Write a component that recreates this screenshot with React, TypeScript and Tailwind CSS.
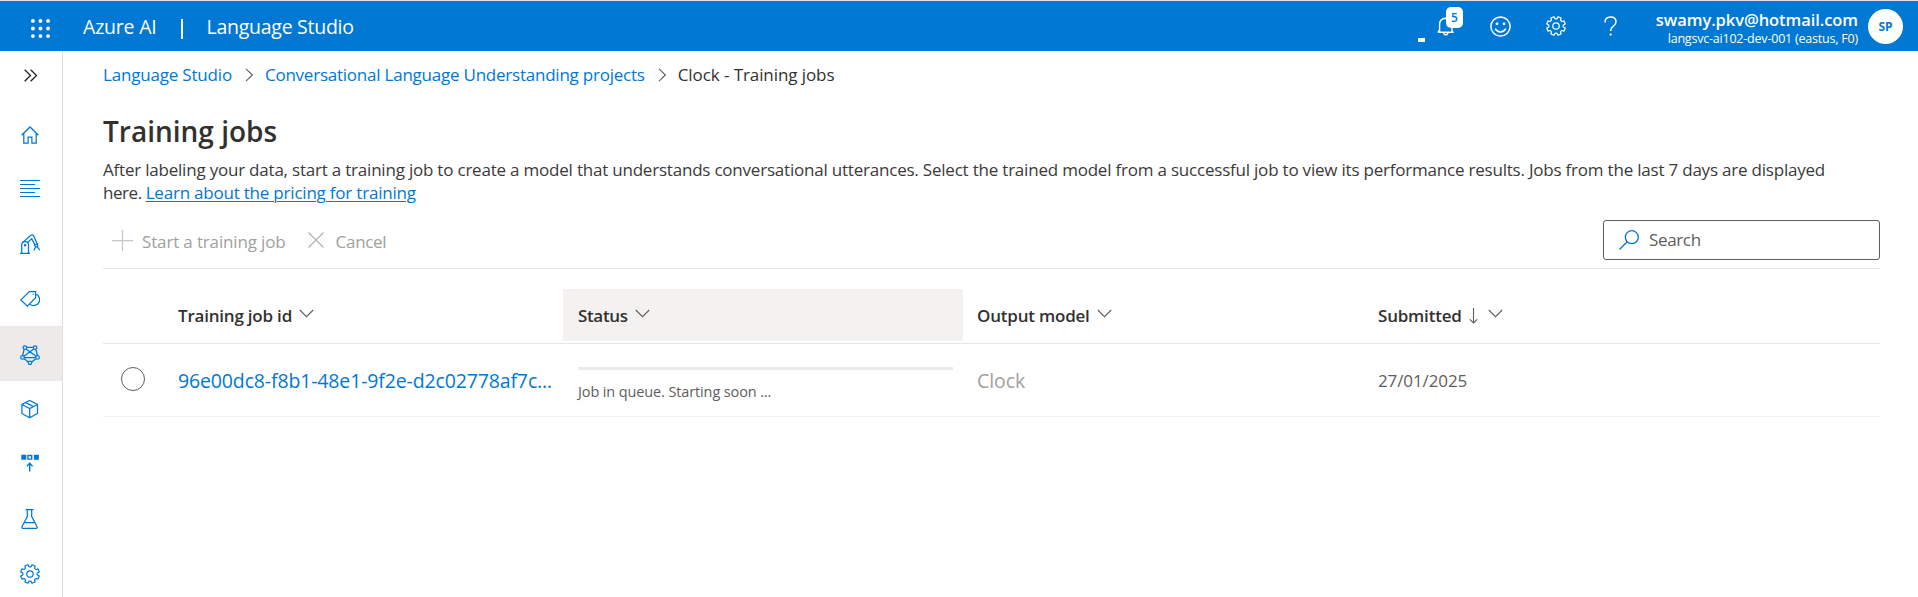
import type { ReactNode } from "react";

function Icon({ size = 20, h, sw = 1.25, className = "", children }: { size?: number; h?: number; sw?: number; className?: string; children: ReactNode }) {
  const height = h ?? size;
  return (
    <svg width={size} height={height} viewBox={`0 0 ${size} ${height}`} fill="none" stroke="currentColor" strokeWidth={sw} className={`block shrink-0 ${className}`}>
      {children}
    </svg>
  );
}

/* Eight teeth, with a rounded valley pointing straight up. */
function gearPath() {
  const p = (r: number, deg: number) => {
    const a = (deg * Math.PI) / 180;
    return `${(10 + r * Math.sin(a)).toFixed(2)} ${(10 - r * Math.cos(a)).toFixed(2)}`;
  };
  let d = "";
  for (let i = 0; i < 8; i++) {
    const c = i * 45 + 22.5;
    d += `${i ? "L" : "M"}${p(7.4, c - 15)}L${p(9.5, c - 10)}L${p(9.5, c + 10)}L${p(7.4, c + 15)}Q${p(6.9, c + 22.5)} ${p(7.4, c + 30)}`;
  }
  return d + "Z";
}

const Gear = () => (
  <Icon>
    <path d={gearPath()} strokeLinejoin="round" />
    <circle cx="10" cy="10" r="3.2" />
  </Icon>
);

const ChevronDown = () => (
  <Icon size={15} h={9} sw={1.1} className="mb-[5px] text-[#605e5c]">
    <path d="M.8 1l6.700 6.700L14.200 1" />
  </Icon>
);

const Crumb = () => (
  <Icon size={9} h={14} sw={1.1} className="text-[#605e5c]">
    <path d="M1 .8L7.400 7 1 13.200" />
  </Icon>
);

const navItems: { id: string; cell: string; icon: ReactNode }[] = [
  { id: "home", cell: "h-[55px]", icon: <Icon><path d="M1.600 10.300L10 2l8.400 8.300M3.800 8.500v9.700h4.300v-6h3.800v6h4.300V8.500" /></Icon> },
  { id: "text", cell: "h-[54px] pb-[2px]", icon: <Icon><path d="M0 2.500h20M0 6.500h15M0 10.500h20M0 14.500h15M0 18.500h20" strokeWidth="1.1" /></Icon> },
  {
    id: "robot",
    cell: "h-[55px]",
    icon: (
      <Icon>
        <path d="M0 19.300h10M1.700 19.300V11a3.400 3.400 0 016.800 0v8.300" />
        <path d="M2.700 8.400L10.900 1.300q1.700-1.200 2.900.6l3.300 8.200M7.600 8.600l4.100-3.900 3.300 6.200" />
        <path d="M14.700 11.200l2.900-1.300v2.900h-2.100zM15.700 12.800l-1.500 3M17.300 12.800l2 2.600v.8M14.300 15.500v.900" />
        <circle cx="5.100" cy="11.300" r="1.200" fill="currentColor" stroke="none" />
      </Icon>
    ),
  },
  {
    id: "tags",
    cell: "h-[55px]",
    icon: (
      <Icon>
        <path d="M.9 10.900L9.300 2.600h6.300v6.200l-8.200 8.300zM15.600 4.900a6 6 0 11-5.900 10.200" />
        <circle cx="13.200" cy="5.200" r=".7" fill="currentColor" stroke="none" />
      </Icon>
    ),
  },
  {
    id: "network",
    cell: "h-[55px] bg-[#edebe9] pt-[3px]",
    icon: (
      <Icon>
        <path d="M6.600 2.400h6.800M4.200 4.200L2.600 10.500M15.800 4.200l1.600 6.300M4.400 12.500h11.200M6.200 3.900l9.900 7.400M13.800 3.900l-9.900 7.400M4.200 13.700l4 3.400M15.800 13.700l-4 3.400" />
        <circle cx="4.900" cy="2.600" r="1.800" />
        <circle cx="15.100" cy="2.600" r="1.800" />
        <circle cx="2.500" cy="12.400" r="1.800" />
        <circle cx="17.500" cy="12.400" r="1.800" />
        <circle cx="10" cy="17.800" r="1.700" />
      </Icon>
    ),
  },
  {
    id: "models",
    cell: "h-[54px] pt-[2px]",
    icon: <Icon><path d="M9.700 1.500l7.800 4v9l-7.800 4.200-7.800-4.200v-9zM1.900 5.500l7.800 4 7.800-4M9.700 9.500v9.200M5.600 3.600l7.900 4" /></Icon>,
  },
  {
    id: "deploy",
    cell: "h-[54px] pt-[2px]",
    icon: (
      <Icon>
        <path d="M1.300 1.800h5v5h-5zM13.900 1.800h5v5h-5z" fill="currentColor" stroke="none" />
        <path d="M8 2.500h3.700v3.600H8zM9.700 18.500V10.400M6.800 13.200l2.900-2.900 2.900 2.900" strokeWidth="1.400" />
      </Icon>
    ),
  },
  {
    id: "flask",
    cell: "h-[56px] pt-[4px]",
    icon: <Icon><path d="M5.500.7h8M7.300.7v6.800L2.100 17.500q-.6 1.900.9 1.900h13q1.500 0 .9-1.900L11.700 7.500V.7M4.200 13.700h10.600" /></Icon>,
  },
  { id: "settings", cell: "h-[55px] pt-[2px]", icon: <Gear /> },
];

const th = "flex items-center text-[17px] font-semibold tracking-[-0.21px] text-[#323130] pt-[2px]";

export default function App() {
  return (
    <div className="flex h-[597px] w-full flex-col overflow-hidden bg-white font-['Open_Sans',sans-serif] text-[#323130]">
      <header className="flex h-[51px] shrink-0 items-center border-t border-[#dfe3e6] bg-[#0078d4] pr-[15px] pl-[31px] text-white">
        <Icon size={19} className="mt-[5px]">
          <g fill="currentColor" stroke="none">
            {[1.9, 9.5, 17.1].map((y) => [1.9, 9.5, 17.1].map((x) => <circle key={`${x}-${y}`} cx={x} cy={y} r="1.900" />))}
          </g>
        </Icon>
        <span className="mt-[1px] ml-[33px] text-[19.5px] tracking-[-0.2px]">Azure AI</span>
        <span className="mt-[5px] ml-[24px] h-[20px] w-[2px] bg-white" />
        <span className="mt-[1px] ml-[24px] text-[19.5px] tracking-[-0.27px]">Language Studio</span>

        <div className="ml-auto flex h-full items-center">
          <span className="mt-[27px] h-[4px] w-[7px] bg-white" />
          <div className="relative ml-[11px]">
            <Icon sw={1.4}>
              <path d="M3.600 15.700V8.500Q3.600 2.500 9.800 2.200q6.200.3 6.200 6.300v7.200M1.800 16.300h16M7.600 16.500q.2 2.300 2.200 2.300t2.200-2.300M3.600 14l-1.500 2" />
            </Icon>
            <span className="absolute -top-[9px] left-[10px] flex h-[21px] w-[17px] items-center justify-center rounded-[5px] bg-white text-[12px] leading-none font-semibold text-[#0078d4]">5</span>
          </div>
          <div className="ml-[34px]">
            <Icon size={21} sw={1.5}>
              <circle cx="10.500" cy="10.500" r="9.600" />
              <path d="M5.200 12.600q1.700 3.300 5.300 3.300t5.300-3.300" />
              <circle cx="7" cy="7.800" r="1.400" fill="currentColor" stroke="none" />
              <circle cx="14" cy="7.800" r="1.400" fill="currentColor" stroke="none" />
            </Icon>
          </div>
          <div className="ml-[35px]"><Gear /></div>
          <div className="ml-[38px]">
            <Icon size={13} h={20} sw={1.5}>
              <path d="M1 6.400Q1 1 6.500 1T12 5.800q0 2.200-2.600 4.400Q6.600 12.300 6.600 15" />
              <circle cx="6.600" cy="18.600" r="1.100" fill="currentColor" stroke="none" />
            </Icon>
          </div>
          <div className="mt-[5px] ml-[39px] flex w-[203px] flex-col items-end whitespace-nowrap">
            <span className="mr-[1px] text-[16.5px] leading-[20px] font-semibold tracking-[-0.07px]">swamy.pkv@hotmail.com</span>
            <span className="mr-[1px] text-[12.500px] leading-[18px] tracking-[-0.21px]">langsvc-ai102-dev-001 (eastus, F0)</span>
          </div>
          <span className="mt-[1px] ml-[9px] flex size-[35px] items-center justify-center rounded-full bg-white text-[12px] font-bold text-[#0078d4]">SP</span>
        </div>
      </header>

      <div className="flex min-h-0 flex-1">
        <nav className="w-[63px] shrink-0 border-r border-[#e1dfdd] text-[#0078d4]">
          <div className="flex h-[56px] items-start pt-[18px] pl-[24px] text-[#201f1e]">
            <Icon size={14} h={13} sw={1.3}><path d="M.7.7l5.800 5.800L.7 12.300M6.700.7l5.800 5.800-5.800 5.800" /></Icon>
          </div>
          {navItems.map(({ id, cell, icon }) => (
            <div key={id} className={`flex items-center justify-center pr-[2px] ${cell}`}>
              {icon}
            </div>
          ))}
        </nav>

        <main className="flex min-w-0 flex-1 flex-col pr-[38px] pl-[40px]">
          <div className="flex h-[47px] items-center text-[17px] whitespace-nowrap text-[#0078d4]">
            <a className="tracking-[-0.19px]">Language Studio</a>
            <span className="ml-[13px]"><Crumb /></span>
            <a className="ml-[11px] tracking-[-0.23px]">Conversational Language Understanding projects</a>
            <span className="ml-[13px]"><Crumb /></span>
            <span className="mt-[1px] ml-[11px] tracking-[-0.08px] text-[#323130]">Clock - Training jobs</span>
          </div>

          <h1 className="mt-[15px] text-[28px] leading-[36px] font-semibold">Training jobs</h1>

          <p className="mt-[9px] h-[46px] text-[17px] leading-[23px] tracking-[-0.21px] text-[#3b3a39]">
            <span className="whitespace-nowrap">After labeling your data, start a training job to create a model that understands conversational utterances. Select the trained model from a successful job to view its performance results. Jobs from the last 7 days are displayed</span>
            <br />
            <span className="tracking-[-0.45px]">here. </span>
            <a className="text-[#0078d4] underline decoration-1 underline-offset-2">Learn about the pricing for training</a>
          </p>

          <div className="mt-[10px] flex h-[55px] items-center border-b border-[#e6e6e6] pl-[9px] text-[17px] text-[#a19f9d]">
            <Icon size={21} className="mb-[2px] text-[#c8c6c4]"><path d="M10.500 0v21M0 10.500h21" /></Icon>
            <span className="mt-[1px] ml-[9px] tracking-[-0.15px]">Start a training job</span>
            <Icon size={16} className="mb-[2px] ml-[22px] text-[#b5b3b1]"><path d="M.5.5l15 15M15.500.5l-15 15" /></Icon>
            <span className="mt-[1px] ml-[12px] tracking-[-0.3px]">Cancel</span>
            <div className="mb-[3px] ml-auto flex h-[40px] w-[277px] items-center rounded-[3px] border border-[#605e5c] pl-[15px] text-[#605e5c]">
              <Icon sw={1.3} className="text-[#0078d4]">
                <circle cx="12.800" cy="7.200" r="6.500" />
                <path d="M8.200 11.800L.5 19.500" />
              </Icon>
              <span className="mt-[1px] ml-[10px] tracking-[-0.35px]">Search</span>
            </div>
          </div>

          <div className="mt-[20px] grid h-[55px] shrink-0 grid-cols-[60px_400px_400px_400px_1fr] border-b border-[#e6e6e6] pb-[2px]">
            <span />
            <div className={`${th} gap-[7px] pl-[15px]`}>Training job id<ChevronDown /></div>
            <div className={`${th} gap-[7px] bg-[#f3f2f1] pl-[15px]`}><span className="tracking-[-0.35px]">Status</span><ChevronDown /></div>
            <div className={`${th} gap-[7px] pl-[14px]`}>Output model<ChevronDown /></div>
            <div className={`${th} pl-[15px]`}>
              Submitted
              <Icon size={9} h={16} sw={1.1} className="mr-[10px] ml-[7px] text-[#605e5c]"><path d="M4.500 0v15M.8 11.300L4.500 15l3.700-3.700" /></Icon>
              <ChevronDown />
            </div>
          </div>

          <div className="grid h-[73px] shrink-0 grid-cols-[60px_400px_400px_400px_1fr] items-center border-b border-[#f3f2f1] whitespace-nowrap">
            <span className="mb-[2px] ml-[18px] size-[24px] rounded-full border-[1.5px] border-[#605e5c]" />
            <span className="pt-[2px] pl-[15px] text-[19.5px] tracking-[-0.14px] text-[#0078d4]">96e00dc8-f8b1-48e1-9f2e-d2c02778af7c...</span>
            <div className="h-full pt-[23px] pr-[10px] pl-[15px]">
              <div className="h-[3px] bg-[#eaeaea]" />
              <div className="mt-[12px] text-[14.5px] leading-[20px] tracking-[-0.12px] text-[#605e5c]">Job in queue. Starting soon ...</div>
            </div>
            <span className="pt-[2px] pl-[14px] text-[19.5px] tracking-[-0.1px] text-[#a19f9d]">Clock</span>
            <span className="pt-[2px] pl-[15px] text-[17px] tracking-[-0.1px] text-[#605e5c]">27/01/2025</span>
          </div>
        </main>
      </div>
    </div>
  );
}
